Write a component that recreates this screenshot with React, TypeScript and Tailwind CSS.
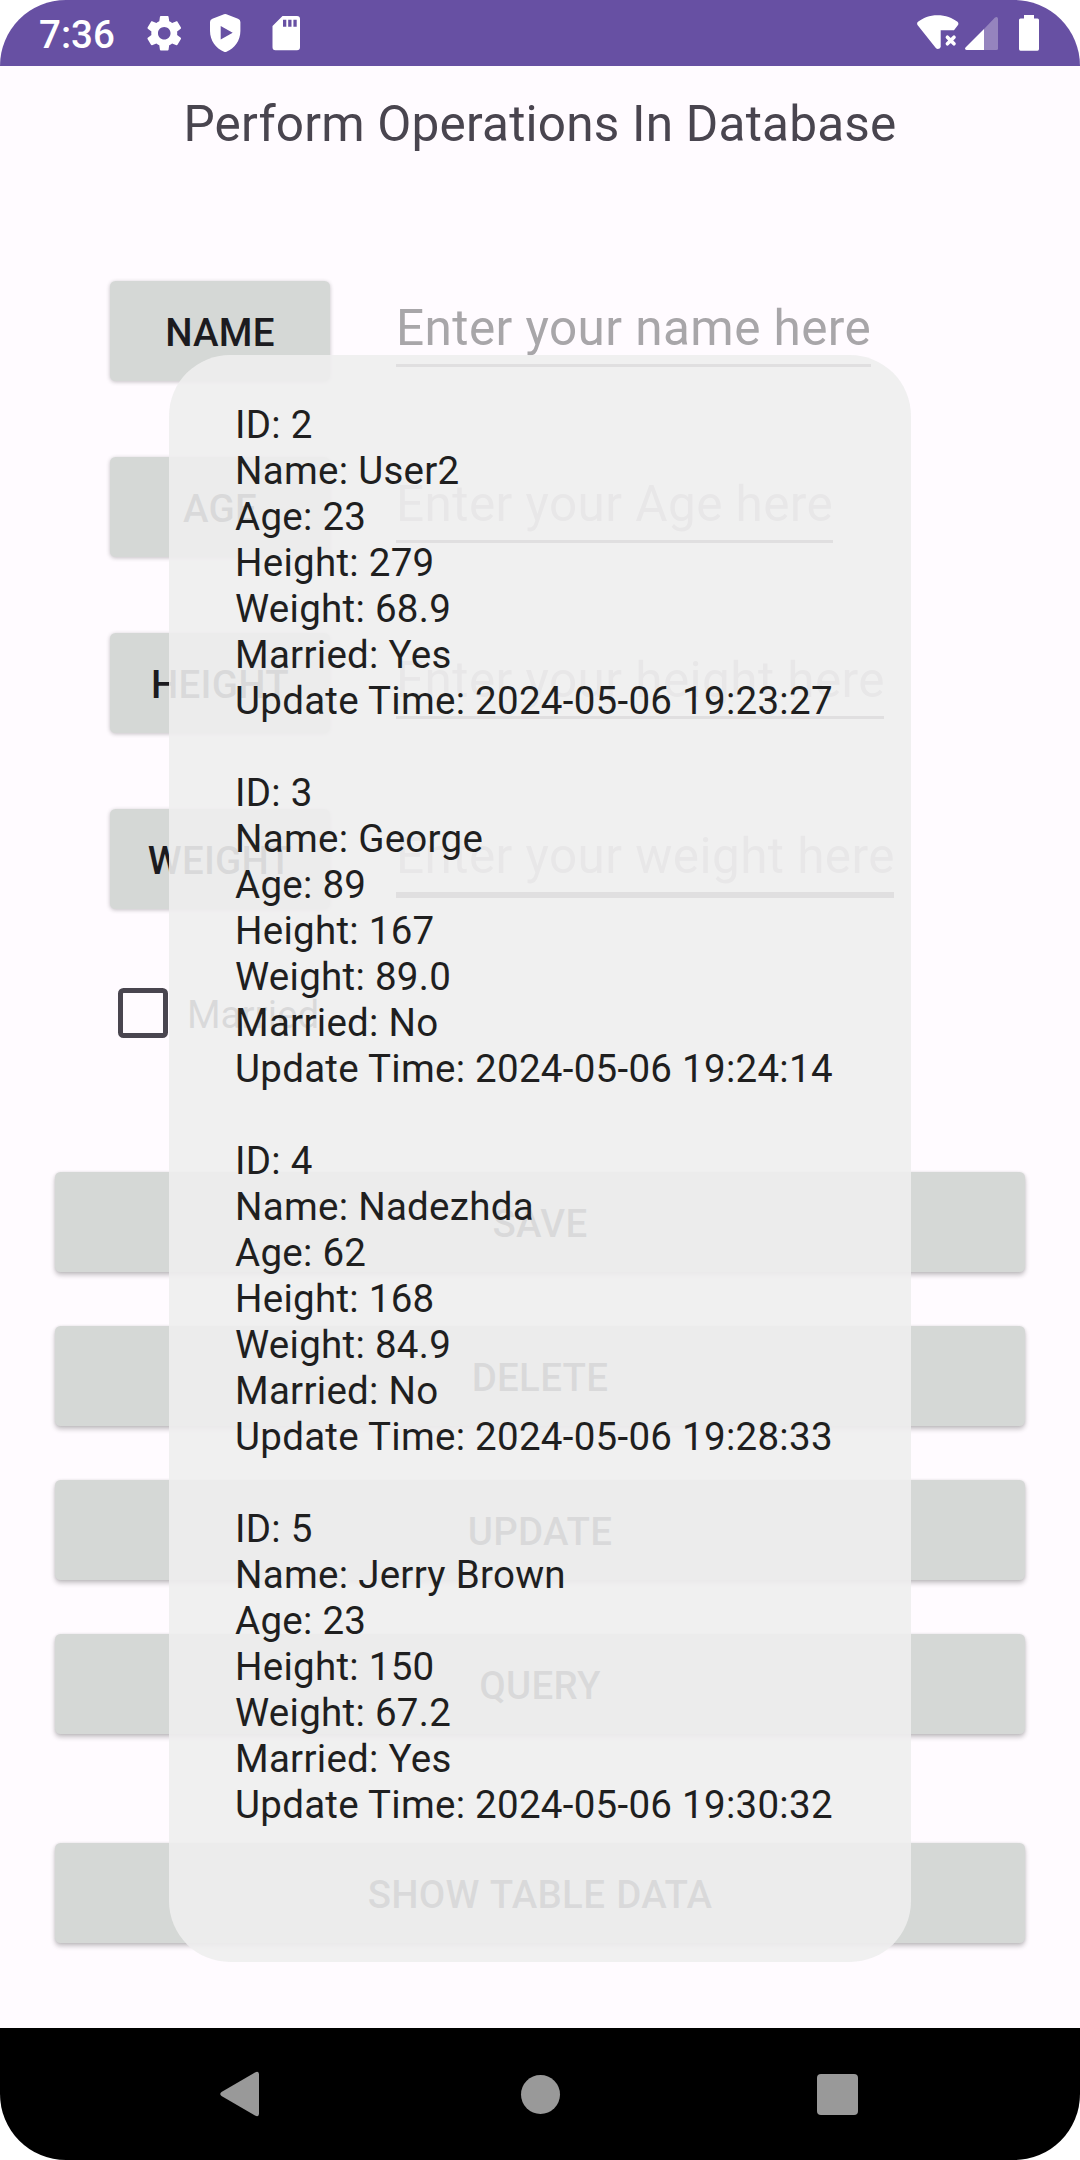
import React from "react";

const FIELDS = [
  { label: "NAME", hint: "Enter your name here", width: "w-[475px]", line: "h-[3px]" },
  { label: "AGE", hint: "Enter your Age here", width: "w-[437px]", line: "h-[3px]" },
  { label: "HEIGHT", hint: "Enter your height here", width: "w-[488px]", line: "h-[3px]" },
  { label: "WEIGHT", hint: "Enter your weight here", width: "w-[498px]", line: "h-[6px]" },
];

const ROWS = [
  { id: 2, name: "User2", age: 23, height: 279, weight: "68.9", married: "Yes", time: "2024-05-06 19:23:27" },
  { id: 3, name: "George", age: 89, height: 167, weight: "89.0", married: "No", time: "2024-05-06 19:24:14" },
  { id: 4, name: "Nadezhda", age: 62, height: 168, weight: "84.9", married: "No", time: "2024-05-06 19:28:33" },
  { id: 5, name: "Jerry Brown", age: 23, height: 150, weight: "67.2", married: "Yes", time: "2024-05-06 19:30:32" },
];

const SHADOW_SMALL = "shadow-[0_1px_4px_rgba(0,0,0,0.24)]";
const SHADOW_LARGE = "shadow-[0_3px_5px_rgba(0,0,0,0.24),0_0_3px_rgba(0,0,0,0.08)]";

function Button({ label, className = "" }: { label: string; className?: string }) {
  return (
    <button
      className={`flex h-[100px] shrink-0 items-center justify-center rounded-[5.5px] bg-[#d5d8d6] pt-[5px] text-[38.5px] font-medium leading-none tracking-[0.25px] text-[#1c1b1f] [word-spacing:1.2px] ${className}`}
    >
      {label}
    </button>
  );
}

function StatusBar() {
  return (
    <header className="flex h-[66px] items-center bg-[#6750a3] pl-[39px] pr-[41px] text-white">
      <span className="w-[107px] pt-[4px] text-[38.5px] font-medium leading-none">7:36</span>
      <svg className="h-[44px] w-[38px]" viewBox="0 0 38 44" fill="currentColor">
        <path transform="translate(-3.35 0.65) scale(1.8)" d="M19.14 12.94c.04-.3.06-.61.06-.94 0-.32-.02-.64-.07-.94l2.03-1.58c.18-.14.23-.41.12-.61l-1.92-3.32c-.12-.22-.37-.29-.59-.22l-2.39.96c-.5-.38-1.03-.7-1.62-.94l-.36-2.54c-.04-.24-.24-.41-.48-.41h-3.84c-.24 0-.43.17-.47.41l-.36 2.54c-.59.24-1.13.57-1.62.94l-2.39-.96c-.22-.08-.47 0-.59.22L2.74 8.87c-.12.21-.08.47.12.61l2.03 1.58c-.05.3-.09.63-.09.94s.02.64.07.94l-2.03 1.58c-.18.14-.23.41-.12.61l1.92 3.32c.12.22.37.29.59.22l2.39-.96c.5.38 1.03.7 1.62.94l.36 2.54c.05.24.24.41.48.41h3.84c.24 0 .44-.17.47-.41l.36-2.54c.59-.24 1.13-.56 1.62-.94l2.39.96c.22.08.47 0 .59-.22l1.92-3.32c.12-.22.07-.47-.12-.61l-2.01-1.58zM12 15.5c-1.93 0-3.5-1.57-3.5-3.5s1.57-3.5 3.5-3.5 3.5 1.57 3.5 3.5-1.57 3.500-3.500 3.500z" />
      </svg>
      <svg className="ml-[25px] h-[44px] w-[34px]" viewBox="0 0 34 44" fill="currentColor">
        <path fillRule="evenodd" d="M15 3.300Q16.200 2.800 17.400 3.300L29 7.800Q31.400 8.800 31.400 11V20C31.400 29.500 25.500 37.500 17.500 40.800Q16.200 41.400 15 40.800C7 37.500 1 29.500 1 20V11Q1 8.800 3.400 7.800ZM11.700 15V28.400L23.700 21.700Z" />
      </svg>
      <svg className="ml-[29px] h-[44px] w-[28px]" viewBox="0 0 28 44" fill="currentColor">
        <path fillRule="evenodd" d="M10.500 5H25Q28 5 28 8V36.300Q28 39.300 25 39.300H3.500Q.5 39.300.5 36.300V15ZM11 8.700V15.700H14.300V8.700ZM16.200 8.700V15.700H19.500V8.700ZM21.400 8.700V15.700H24.700V8.700Z" />
      </svg>
      <div className="ml-auto flex items-center">
        <svg className="h-[44px] w-[42px]" viewBox="0 0 42 44" fill="currentColor">
          <path d="M20.500 4.300C28.500 4.300 35.500 7 40.500 10.800Q42 12.300 41 14L37 19.300H23.700V36Q23 38 20.800 38Q19.800 38 18.800 37L.5 14Q-.5 12 1 10.800C6 7 12.500 4.300 20.500 4.300Z" />
          <path d="M30.400 26.200L37 32.800M37 26.200L30.400 32.800" stroke="currentColor" strokeWidth="3.600" strokeLinecap="round" />
        </svg>
        <svg className="ml-[6px] h-[44px] w-[33px]" viewBox="0 0 33 44" fill="currentColor">
          <path d="M19 18V39H1.500Q-.8 38.500.5 36.500Z" />
          <path opacity=".3" d="M19 18L30 6.500Q32.500 5 33 7.500V37.500Q33 39 31.500 39H19Z" />
        </svg>
        <svg className="ml-[21px] h-[44px] w-[20px]" viewBox="0 0 20 44" fill="currentColor">
          <path d="M5 4H15V7.500H18.500Q20 7.500 20 9V38Q20 39.700 18.500 39.700H1.500Q0 39.700 0 38V9Q0 7.500 1.500 7.500H5Z" />
        </svg>
      </div>
    </header>
  );
}

function Toast() {
  return (
    <div className="absolute left-[169px] top-[355px] h-[1607px] w-[742px] rounded-[61px] bg-[#eeeeee]/90 pl-[66px] pt-[47px] text-[38.5px] leading-[46px] tracking-[0.28px] text-[#1f1f1f]">
      {ROWS.map((row) => (
        <div key={row.id} className="mb-[46px] whitespace-nowrap">
          <p>ID: {row.id}</p>
          <p>Name: {row.name}</p>
          <p>Age: {row.age}</p>
          <p>Height: {row.height}</p>
          <p>Weight: {row.weight}</p>
          <p>Married: {row.married}</p>
          <p>Update Time: {row.time}</p>
        </div>
      ))}
    </div>
  );
}

export default function App() {
  return (
    <div className="h-[2160px] w-[1080px] bg-white font-[Roboto,sans-serif]">
      <div className="relative flex h-full flex-col overflow-hidden rounded-[66px] bg-[#fffbff]">
        <StatusBar />
        <main className="flex flex-1 flex-col">
          <h1 className="pt-[29px] text-center text-[49.5px] leading-[58px] tracking-[0.21px] text-[#49454f]">
            Perform Operations In Database
          </h1>
          <div className="mt-[128px] flex flex-col gap-[76px] pl-[110px]">
            {FIELDS.map((field) => (
              <div key={field.label} className="flex h-[100px]">
                <Button label={field.label} className={`w-[220px] ${SHADOW_SMALL}`} />
                <div
                  className={`relative ml-[66px] whitespace-nowrap pt-[18px] text-[49.5px] leading-[58px] tracking-[0.42px] text-[#a8a6a9] ${field.width}`}
                >
                  {field.hint}
                  <span className={`absolute inset-x-0 top-[83px] bg-[#49454f]/90 ${field.line}`} />
                </div>
              </div>
            ))}
          </div>
          <label className="ml-[118px] mt-[79px] flex h-[50px] items-center text-[38.5px] leading-none text-[#1c1b1f]">
            <span className="h-[50px] w-[50px] rounded-[5.5px] border-[5.5px] border-[#49454f]" />
            <span className="ml-[19px] pt-[5px]">Married</span>
          </label>
          <div className="mt-[134px] flex flex-col gap-[54px] px-[55px]">
            <Button label="SAVE" className={SHADOW_LARGE} />
            <Button label="DELETE" className={SHADOW_LARGE} />
            <Button label="UPDATE" className={SHADOW_LARGE} />
            <Button label="QUERY" className={SHADOW_LARGE} />
            <Button label="SHOW TABLE DATA" className={`mt-[55px] ${SHADOW_LARGE}`} />
          </div>
        </main>
        <nav className="flex h-[132px] items-center bg-black text-[#999999]">
          <svg className="ml-[220px] h-[46px] w-[39px]" viewBox="0 0 39 46" fill="currentColor">
            <path d="M35 1.500Q38.500-.5 39 3V43Q38.500 46.500 35 44.500L1.500 25Q-1 23 1.500 21Z" />
          </svg>
          <span className="ml-[262px] h-[39px] w-[39px] rounded-full bg-[#999999]" />
          <span className="ml-[257px] h-[41px] w-[41px] rounded-[4px] bg-[#999999]" />
        </nav>
        <Toast />
      </div>
    </div>
  );
}
